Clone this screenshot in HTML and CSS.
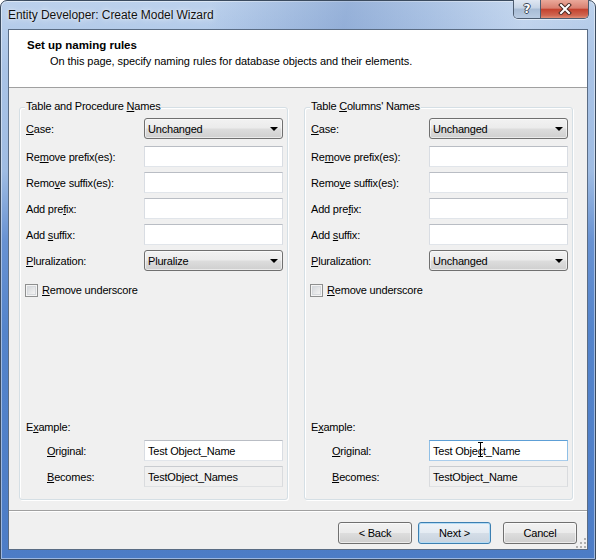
FILE: index.html
```html
<!DOCTYPE html>
<html>
<head>
<meta charset="utf-8">
<title>Entity Developer: Create Model Wizard</title>
<link rel="stylesheet" href="styles.css">
</head>
<body>
<div class="window">
  <div class="titlebar">
    <span class="title">Entity Developer: Create Model Wizard</span>
    <div class="caption-btns">
      <div class="cbtn help"><span>?</span></div>
      <div class="cbtn close">
        <svg width="14" height="12" viewBox="0 0 14 12"><path d="M3 2 L11 10 M11 2 L3 10" stroke="#4a2a24" stroke-width="4" stroke-linecap="square"/><path d="M3 2 L11 10 M11 2 L3 10" stroke="#fff" stroke-width="2" stroke-linecap="square"/></svg>
      </div>
    </div>
  </div>
  <div class="client">
    <div class="header">
      <div class="h-title">Set up naming rules</div>
      <div class="h-desc">On this page, specify naming rules for database objects and their elements.</div>
    </div>
    <div class="content">
      <div class="groups">
        <div class="group">
          <span class="legend">Table and Procedure <u>N</u>ames</span>
          <div class="fields">
            <div class="row combo-row"><span class="lbl"><u>C</u>ase:</span><div class="ctl combo"><span>Unchanged</span><i class="arrow"></i></div></div>
            <div class="row"><span class="lbl">Re<u>m</u>ove prefix(es):</span><div class="ctl textbox"></div></div>
            <div class="row"><span class="lbl">Remo<u>v</u>e suffix(es):</span><div class="ctl textbox"></div></div>
            <div class="row"><span class="lbl">Add pre<u>f</u>ix:</span><div class="ctl textbox"></div></div>
            <div class="row"><span class="lbl">Add <u>s</u>uffix:</span><div class="ctl textbox"></div></div>
            <div class="row"><span class="lbl"><u>P</u>luralization:</span><div class="ctl combo"><span>Pluralize</span><i class="arrow"></i></div></div>
            <div class="check-row"><span class="checkbox"></span><span><u>R</u>emove underscore</span></div>
          </div>
          <div class="example">
            <div class="ex-label">E<u>x</u>ample:</div>
            <div class="row"><span class="lbl indent"><u>O</u>riginal:</span><div class="ctl textbox"><span>Test Object_Name</span></div></div>
            <div class="row"><span class="lbl indent"><u>B</u>ecomes:</span><div class="ctl textbox disabled"><span>TestObject_Names</span></div></div>
          </div>
        </div>
        <div class="group">
          <span class="legend">Table <u>C</u>olumns' Names</span>
          <div class="fields">
            <div class="row combo-row"><span class="lbl"><u>C</u>ase:</span><div class="ctl combo"><span>Unchanged</span><i class="arrow"></i></div></div>
            <div class="row"><span class="lbl">Re<u>m</u>ove prefix(es):</span><div class="ctl textbox"></div></div>
            <div class="row"><span class="lbl">Remo<u>v</u>e suffix(es):</span><div class="ctl textbox"></div></div>
            <div class="row"><span class="lbl">Add pre<u>f</u>ix:</span><div class="ctl textbox"></div></div>
            <div class="row"><span class="lbl">Add <u>s</u>uffix:</span><div class="ctl textbox"></div></div>
            <div class="row"><span class="lbl"><u>P</u>luralization:</span><div class="ctl combo"><span>Unchanged</span><i class="arrow"></i></div></div>
            <div class="check-row"><span class="checkbox"></span><span><u>R</u>emove underscore</span></div>
          </div>
          <div class="example">
            <div class="ex-label">E<u>x</u>ample:</div>
            <div class="row"><span class="lbl indent"><u>O</u>riginal:</span><div class="ctl textbox focused"><span>Test Object_Name</span><i class="ibeam"></i></div></div>
            <div class="row"><span class="lbl indent"><u>B</u>ecomes:</span><div class="ctl textbox disabled"><span>TestObject_Name</span></div></div>
          </div>
        </div>
      </div>
      <div class="footer">
        <div class="btn">&lt; Back</div>
        <div class="btn default">Next &gt;</div>
        <div class="btn cancel">Cancel</div>
      </div>
    </div>
    <div class="grip"></div>
  </div>
</div>
</body>
</html>
```

FILE: styles.css
```css
* { box-sizing: border-box; }
html, body { margin: 0; padding: 0; }
body {
  width: 596px;
  height: 560px;
  overflow: hidden;
  background: #fff;
  font-family: "Liberation Sans", Arial, sans-serif;
  font-size: 11px;
  letter-spacing: -0.2px;
  color: #000;
}
u { text-decoration: underline; text-underline-offset: 1px; }

.window {
  width: 596px;
  height: 560px;
  border: 1px solid #3b4b5f;
  border-radius: 7px 7px 0 0;
  padding: 0 7px 9px 7px;
  display: flex;
  flex-direction: column;
  background: linear-gradient(to bottom, #bcd1ec 0px, #a9c3e6 70px, #9fbce3 170px, #6892d2 240px, #5484cb 330px, #4c7cc6 560px);
  box-shadow: inset 0 0 0 1px rgba(255,255,255,0.45);
}

.titlebar {
  height: 28px;
  flex: none;
  display: flex;
  justify-content: space-between;
  align-items: flex-start;
  margin: 0 -7px;
  padding: 0 7px;
  border-radius: 6px 6px 0 0;
  background: linear-gradient(100deg, rgba(255,255,255,0) 0%, rgba(60,100,170,0) 35%, rgba(60,100,170,0.28) 58%, rgba(60,100,170,0.12) 72%, rgba(255,255,255,0.15) 88%, rgba(255,255,255,0) 100%);
}
.title {
  font-size: 12px;
  letter-spacing: -0.05px;
  line-height: 14px;
  margin-top: 7px;
  color: #111;
  text-shadow: 0 0 6px rgba(255,255,255,0.9), 0 0 2px rgba(255,255,255,0.7);
}
.caption-btns {
  display: flex;
  margin-top: -1px;
  margin-right: -1px;
  height: 19px;
  border: 1px solid #4d5c70;
  border-top: none;
  border-radius: 0 0 5px 5px;
  overflow: hidden;
  box-shadow: 0 1px 0 rgba(255,255,255,0.5);
}
.cbtn {
  display: flex;
  align-items: center;
  justify-content: center;
  height: 100%;
}
.help {
  width: 27px;
  border-right: 1px solid #4d5c70;
  background: linear-gradient(to bottom, #dfe7f2 0%, #c5d3e5 45%, #a7bbd4 50%, #b9cbe2 100%);
}
.help span {
  font-family: "DejaVu Sans", sans-serif;
  font-weight: bold;
  font-size: 12px;
  color: #fff;
  letter-spacing: 0;
  text-shadow: 1px 0 0 #3a4658, -1px 0 0 #3a4658, 0 1px 0 #3a4658, 0 -1px 0 #3a4658;
}
.close {
  width: 47px;
  background: linear-gradient(to bottom, #eaa99a 0%, #d98070 45%, #c4432f 52%, #cf6550 85%, #e08f77 100%);
}

.client {
  flex: 1;
  position: relative;
  border: 1px solid #5a6c84;
  background: #f0f0f0;
  display: flex;
  flex-direction: column;
}

.header {
  height: 58px;
  flex: none;
  background: #fff;
  border-bottom: 1px solid #a0a0a0;
  padding: 8px 0 0 18px;
  line-height: 14px;
}
.h-title {
  font-weight: bold;
  font-size: 11.5px;
  letter-spacing: 0;
}
.h-desc {
  margin-top: 2px;
  padding-left: 23px;
  letter-spacing: -0.07px;
}

.content {
  flex: 1;
  display: flex;
  flex-direction: column;
}
.groups {
  display: flex;
  gap: 16px;
  padding: 19px 14px 0 10px;
}
.group {
  position: relative;
  width: 269px;
  height: 393px;
  border: 1px solid #d5dfe5;
  border-radius: 3px;
  box-shadow: inset 1px 1px 0 #fff, 1px 1px 0 #fff;
  padding: 10px 4px 12px 6px;
  display: flex;
  flex-direction: column;
  justify-content: space-between;
  line-height: 14px;
}
.legend {
  position: absolute;
  top: -9px;
  left: 5px;
  padding: 0 1px;
  background: #f0f0f0;
}
.fields {
  display: flex;
  flex-direction: column;
  gap: 5px;
}
.row {
  display: flex;
  align-items: center;
  height: 21px;
}
.combo-row { margin-bottom: 2px; }
.lbl {
  width: 118px;
  flex: none;
}
.lbl.indent { padding-left: 21px; }
.ctl {
  width: 139px;
  height: 21px;
  flex: none;
  display: flex;
  align-items: center;
  padding-left: 3px;
}
.textbox {
  position: relative;
  background: #fff;
  border: 1px solid;
  border-color: #b9bdc4 #d9dde3 #e1e5ea #d9dde3;
}
.textbox.disabled {
  background: #f0f0f0;
  border-color: #c9ccd0 #d9dbde #dfe1e3 #d9dbde;
}
.textbox.focused {
  border-color: #5d9fd6 #8fbfe6 #a9cdec #8fbfe6;
}
.ibeam {
  position: absolute;
  left: 48px;
  top: 1px;
  width: 5px;
  height: 15px;
  border-top: 1px solid #000;
  border-bottom: 1px solid #000;
  background: linear-gradient(to right, transparent 2px, #000 2px, #000 3px, transparent 3px);
}
.combo {
  position: relative;
  justify-content: space-between;
  border: 1px solid #707070;
  border-radius: 3px;
  background: linear-gradient(to bottom, #f2f2f2 0%, #ebebeb 48%, #dddddd 52%, #cfcfcf 100%);
  box-shadow: inset 0 0 0 1px rgba(255,255,255,0.55);
  padding-right: 4px;
}
.arrow {
  width: 0;
  height: 0;
  border-left: 4px solid transparent;
  border-right: 4px solid transparent;
  border-top: 4px solid #000;
  margin-top: 1px;
}
.check-row {
  display: flex;
  align-items: center;
  margin-top: 6px;
  margin-left: -1px;
  gap: 4px;
  height: 16px;
}
.checkbox {
  width: 13px;
  height: 13px;
  border: 1px solid #8e8f8f;
  background: linear-gradient(135deg, #cdd1d6 0%, #eeeeee 70%, #f8f8f8 100%);
  box-shadow: inset 0 0 0 1px #f4f4f4, inset 0 0 0 2px #d6d9dd;
}
.example {
  display: flex;
  flex-direction: column;
  gap: 5px;
}
.ex-label {
  margin-bottom: 1px;
}

.footer {
  margin-top: 10px;
  border-top: 1px solid #a0a0a0;
  box-shadow: inset 0 1px 0 #fff;
  padding: 11px 10px 0 0;
  display: flex;
  justify-content: flex-end;
  gap: 6px;
}
.btn {
  width: 74px;
  height: 22px;
  border: 1px solid #707070;
  border-radius: 3px;
  background: linear-gradient(to bottom, #f2f2f2 0%, #ebebeb 48%, #dddddd 52%, #cfcfcf 100%);
  box-shadow: inset 0 0 0 1px rgba(255,255,255,0.6);
  display: flex;
  align-items: center;
  justify-content: center;
  line-height: 14px;
}
.btn.default {
  width: 73px;
  border-color: #3c7fb1;
  background: linear-gradient(to bottom, #eef3f8 0%, #e4ebf2 48%, #d4dde7 52%, #c8d3df 100%);
  box-shadow: inset 0 0 0 1px #b4dcf5;
}
.btn.cancel { margin-left: 6px; }

.grip {
  position: absolute;
  right: 1px;
  bottom: 1px;
  width: 10px;
  height: 10px;
  background:
    linear-gradient(#b0b0b0, #b0b0b0) 8px 0 / 2px 2px no-repeat,
    linear-gradient(#b0b0b0, #b0b0b0) 4px 4px / 2px 2px no-repeat,
    linear-gradient(#b0b0b0, #b0b0b0) 8px 4px / 2px 2px no-repeat,
    linear-gradient(#b0b0b0, #b0b0b0) 0 8px / 2px 2px no-repeat,
    linear-gradient(#b0b0b0, #b0b0b0) 4px 8px / 2px 2px no-repeat,
    linear-gradient(#b0b0b0, #b0b0b0) 8px 8px / 2px 2px no-repeat;
}
```
